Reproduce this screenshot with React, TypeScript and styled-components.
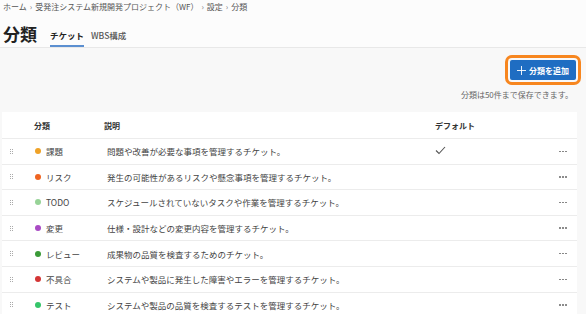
import styled, { createGlobalStyle } from 'styled-components';

const GlobalStyle = createGlobalStyle`
  html, body {
    margin: 0;
    padding: 0;
    background: #f8f8f8;
    font-family: "Noto Sans CJK JP", "Noto Sans", sans-serif;
    color: #333;
  }
`;

const Page = styled.div`
  width: 586px;
  height: 314px;
  overflow: hidden;
  background: #f8f8f8;
`;

const Header = styled.header`
  background: #fcfcfc;
  border-bottom: 1px solid #e8e8e8;
  padding: 0 3px;
  height: 48px;
  box-sizing: border-box;
`;

const Breadcrumb = styled.div`
  display: flex;
  align-items: center;
  font-size: 8px;
  color: #555;
  line-height: 12px;
  padding-top: 1px;
  white-space: nowrap;
`;

const Sep = styled.span`
  margin: 0 3px;
  font-size: 8px;
  color: #777;
`;

const TitleRow = styled.div`
  display: flex;
  align-items: flex-end;
  gap: 13px;
  margin-top: 8px;
`;

const Title = styled.h1`
  margin: 0;
  font-size: 17px;
  font-weight: 700;
  line-height: 25px;
  color: #222;
`;

const Tabs = styled.div`
  display: flex;
  gap: 7px;
  margin-bottom: -1px;
`;

const Tab = styled.div<{ $active?: boolean }>`
  font-size: 8.5px;
  font-weight: ${(p) => (p.$active ? 700 : 500)};
  color: ${(p) => (p.$active ? '#222' : '#555')};
  line-height: 14px;
  padding-bottom: 3px;
  border-bottom: 2px solid ${(p) => (p.$active ? '#5b8fd0' : 'transparent')};
`;

const Main = styled.main`
  padding: 0 9px 0 2px;
`;

const Toolbar = styled.div`
  display: flex;
  justify-content: flex-end;
  padding-top: 12px;
`;

const AddButton = styled.button`
  display: flex;
  align-items: center;
  gap: 3px;
  height: 20px;
  padding: 0 7px 0 7px;
  background: #1f6dc2;
  color: #fff;
  border: none;
  border-radius: 2px;
  font-family: inherit;
  font-size: 8px;
  font-weight: 700;
  outline: 3px solid #f7861f;
  outline-offset: 2px;
  margin-right: 1px;
`;

const Note = styled.div`
  text-align: right;
  font-size: 8px;
  color: #666;
  margin-top: 8px;
  line-height: 14px;
  padding-right: 4px;
`;

const Card = styled.div`
  margin-top: 10px;
  background: #fff;
`;

const Row = styled.div<{ $head?: boolean }>`
  display: grid;
  grid-template-columns: 32px 70px 331px 1fr 30px;
  align-items: center;
  height: ${(p) => (p.$head ? '27px' : '25.6px')};
  border-bottom: 1px solid #ececec;
  font-size: ${(p) => (p.$head ? '8px' : '8.5px')};
  font-weight: ${(p) => (p.$head ? 700 : 400)};
  color: ${(p) => (p.$head ? '#333' : '#444')};
  box-sizing: border-box;
`;

const Handle = styled.div`
  display: grid;
  grid-template-columns: 1px 1px;
  gap: 1px;
  padding-left: 8px;
  & span {
    width: 1px;
    height: 1px;
    background: #aaa;
  }
`;

const Label = styled.div`
  display: flex;
  align-items: center;
  gap: 5px;
  padding-left: 1px;
`;

const Dot = styled.span<{ $color: string }>`
  width: 6px;
  height: 6px;
  border-radius: 50%;
  background: ${(p) => p.$color};
`;

const Cell = styled.div<{ $desc?: boolean }>`
  white-space: nowrap;
  padding-left: ${(p) => (p.$desc ? '3px' : '0')};
`;

const More = styled.div`
  display: flex;
  gap: 1.5px;
  justify-content: flex-start;
  padding-left: 12px;
  & span {
    width: 1.5px;
    height: 1.5px;
    border-radius: 50%;
    background: #777;
  }
`;

const rows = [
  { name: '課題', color: '#efa227', desc: '問題や改善が必要な事項を管理するチケット。', def: true },
  { name: 'リスク', color: '#ef6421', desc: '発生の可能性があるリスクや懸念事項を管理するチケット。' },
  { name: 'TODO', color: '#97d397', desc: 'スケジュールされていないタスクや作業を管理するチケット。' },
  { name: '変更', color: '#a94bc4', desc: '仕様・設計などの変更内容を管理するチケット。' },
  { name: 'レビュー', color: '#3b9a38', desc: '成果物の品質を検査するためのチケット。' },
  { name: '不具合', color: '#d43535', desc: 'システムや製品に発生した障害やエラーを管理するチケット。' },
  { name: 'テスト', color: '#35c56a', desc: 'システムや製品の品質を検査するテストを管理するチケット。' },
];

const crumbs = ['ホーム', '受発注システム新規開発プロジェクト（WF）', '設定', '分類'];

function Check() {
  return (
    <svg width="11" height="9" viewBox="0 0 11 9">
      <path d="M1 4.5 L4 7.5 L10 1" fill="none" stroke="#555" strokeWidth="1.1" />
    </svg>
  );
}

export default function App() {
  return (
    <Page>
      <GlobalStyle />
      <Header>
        <Breadcrumb>
          {crumbs.map((c, i) => (
            <span key={c}>
              {i > 0 && <Sep>›</Sep>}
              {c}
            </span>
          ))}
        </Breadcrumb>
        <TitleRow>
          <Title>分類</Title>
          <Tabs>
            <Tab $active>チケット</Tab>
            <Tab>WBS構成</Tab>
          </Tabs>
        </TitleRow>
      </Header>
      <Main>
        <Toolbar>
          <AddButton>
            <svg width="9" height="9" viewBox="0 0 9 9">
              <path d="M4.5 0 V9 M0 4.5 H9" stroke="#fff" strokeWidth="0.9" />
            </svg>
            分類を追加
          </AddButton>
        </Toolbar>
        <Note>分類は50件まで保存できます。</Note>
        <Card>
          <Row $head>
            <div />
            <Cell>分類</Cell>
            <Cell>説明</Cell>
            <Cell>デフォルト</Cell>
            <div />
          </Row>
          {rows.map((r) => (
            <Row key={r.name}>
              <Handle>
                {Array.from({ length: 6 }).map((_, i) => (
                  <span key={i} />
                ))}
              </Handle>
              <Label>
                <Dot $color={r.color} />
                {r.name}
              </Label>
              <Cell $desc>{r.desc}</Cell>
              <Cell>{r.def ? <Check /> : null}</Cell>
              <More>
                <span />
                <span />
                <span />
              </More>
            </Row>
          ))}
        </Card>
      </Main>
    </Page>
  );
}
